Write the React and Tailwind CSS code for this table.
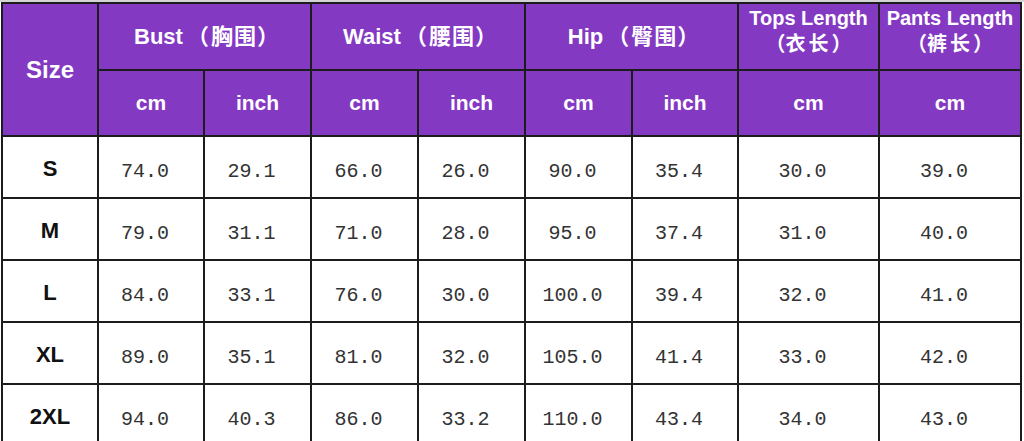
import React from "react";

const rows = [
  ["S", "74.0", "29.1", "66.0", "26.0", "90.0", "35.4", "30.0", "39.0"],
  ["M", "79.0", "31.1", "71.0", "28.0", "95.0", "37.4", "31.0", "40.0"],
  ["L", "84.0", "33.1", "76.0", "30.0", "100.0", "39.4", "32.0", "41.0"],
  ["XL", "89.0", "35.1", "81.0", "32.0", "105.0", "41.4", "33.0", "42.0"],
  ["2XL", "94.0", "40.3", "86.0", "33.2", "110.0", "43.4", "34.0", "43.0"],
];

const sans = "font-['Liberation_Sans','Noto_Sans_CJK_SC',sans-serif]";
const head = `bg-[#8439c3] text-white font-bold flex items-center justify-center text-center ${sans}`;

function Label({ en, zh }) {
  return (
    <span className="whitespace-nowrap">
      {en}
      <span className="ml-[4px] mr-[2px]">（</span>
      <span className="tracking-[1px]">{zh}</span>
      <span className="mr-[-4px]">）</span>
    </span>
  );
}

export default function App() {
  return (
    <div className="w-[1024px] h-[441px] overflow-hidden bg-white">
      <div className="h-[2px] bg-[#d4d4d4]" />
      <div className="ml-[1px] w-[1021px] bg-[#1c1c1c] p-[2px] grid gap-[2px] grid-cols-[94px_104px_105px_105px_105px_105px_104px_139px_140px] grid-rows-[65px_64px_60px_60px_60px_60px_60px]">
        <div className={`${head} row-span-2 text-[24px]`}>Size</div>
        <div className={`${head} col-span-2 text-[22px]`}><Label en="Bust" zh="胸围" /></div>
        <div className={`${head} col-span-2 text-[22px]`}><Label en="Waist" zh="腰围" /></div>
        <div className={`${head} col-span-2 text-[22px]`}><Label en="Hip" zh="臀围" /></div>
        <div className={`${head} flex-col text-[20px] leading-[26px] pb-[12px]`}>
          <span className="whitespace-nowrap">Tops Length</span>
          <span className="whitespace-nowrap">（<span className="tracking-[3px]">衣长</span>）</span>
        </div>
        <div className={`${head} flex-col text-[20px] leading-[26px] pb-[12px]`}>
          <span className="whitespace-nowrap">Pants Length</span>
          <span className="whitespace-nowrap">（<span className="tracking-[3px]">裤长</span>）</span>
        </div>
        {["cm", "inch", "cm", "inch", "cm", "inch", "cm", "cm"].map((u, i) => (
          <div key={i} className={`${head} text-[21px]`}>{u}</div>
        ))}
        {rows.map((r) =>
          r.map((v, i) =>
            i === 0 ? (
              <div key={r[0] + i} className={`bg-white flex items-center justify-center pt-[2px] font-bold text-[22px] text-[#111] ${sans}`}>{v}</div>
            ) : (
              <div key={r[0] + i} className="bg-white flex items-center justify-center pr-[12px] pt-[10px] text-[20px] text-[#333] font-['Liberation_Mono',monospace]">{v}</div>
            )
          )
        )}
      </div>
    </div>
  );
}
